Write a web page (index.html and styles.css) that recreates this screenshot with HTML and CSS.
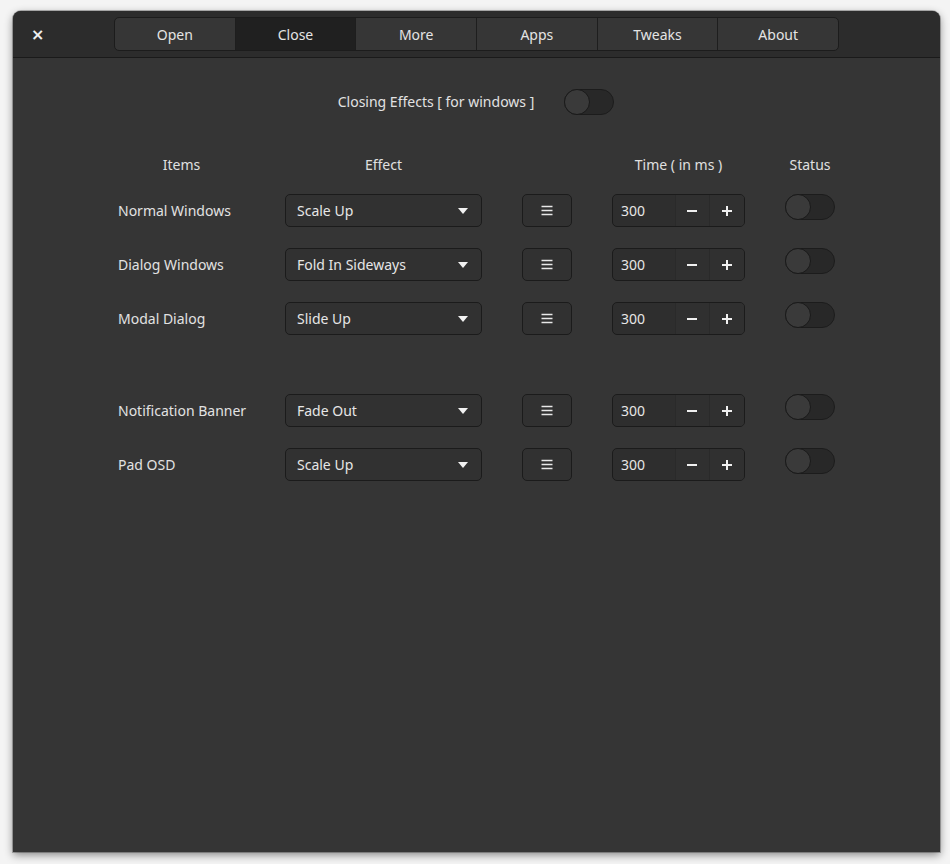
FILE: index.html
```html
<!DOCTYPE html>
<html>
<head>
<meta charset="utf-8">
<link rel="stylesheet" href="styles.css">
</head>
<body>
<div class="window">
  <header class="headerbar">
    <div class="close-cell"><span class="close">×</span></div>
    <nav class="tabs">
      <span class="tab">Open</span>
      <span class="tab active">Close</span>
      <span class="tab">More</span>
      <span class="tab">Apps</span>
      <span class="tab">Tweaks</span>
      <span class="tab">About</span>
    </nav>
    <div></div>
  </header>
  <main class="content">
    <div class="master">
      <span class="master-label">Closing Effects [ for windows ]</span>
      <span class="switch"><span class="knob"></span></span>
    </div>
    <div class="table">
      <div class="row head">
        <span class="h">Items</span>
        <span class="h">Effect</span>
        <span></span>
        <span class="h">Time ( in ms )</span>
        <span class="h">Status</span>
      </div>

      <div class="row">
        <span class="label">Normal Windows</span>
        <span class="dropdown"><span>Scale Up</span><svg class="arrow" width="10" height="6" viewBox="0 0 10 6"><path d="M0 0H10L5 6Z" fill="#f2f2f2"/></svg></span>
        <span class="btn menu"><svg width="12" height="11" viewBox="0 0 12 11"><path d="M0.5 1.5H11.5M0.5 5.5H11.5M0.5 9.5H11.5" stroke="#e8e8e8" stroke-width="1.5"/></svg></span>
        <span class="spin"><span class="val">300</span><span class="sb"><svg width="12" height="12" viewBox="0 0 12 12"><path d="M1 6H11" stroke="#f0f0f0" stroke-width="2"/></svg></span><span class="sb"><svg width="12" height="12" viewBox="0 0 12 12"><path d="M1 6H11M6 1V11" stroke="#f0f0f0" stroke-width="2"/></svg></span></span>
        <span class="switch"><span class="knob"></span></span>
      </div>

      <div class="row">
        <span class="label">Dialog Windows</span>
        <span class="dropdown"><span>Fold In Sideways</span><svg class="arrow" width="10" height="6" viewBox="0 0 10 6"><path d="M0 0H10L5 6Z" fill="#f2f2f2"/></svg></span>
        <span class="btn menu"><svg width="12" height="11" viewBox="0 0 12 11"><path d="M0.5 1.5H11.5M0.5 5.5H11.5M0.5 9.5H11.5" stroke="#e8e8e8" stroke-width="1.5"/></svg></span>
        <span class="spin"><span class="val">300</span><span class="sb"><svg width="12" height="12" viewBox="0 0 12 12"><path d="M1 6H11" stroke="#f0f0f0" stroke-width="2"/></svg></span><span class="sb"><svg width="12" height="12" viewBox="0 0 12 12"><path d="M1 6H11M6 1V11" stroke="#f0f0f0" stroke-width="2"/></svg></span></span>
        <span class="switch"><span class="knob"></span></span>
      </div>

      <div class="row">
        <span class="label">Modal Dialog</span>
        <span class="dropdown"><span>Slide Up</span><svg class="arrow" width="10" height="6" viewBox="0 0 10 6"><path d="M0 0H10L5 6Z" fill="#f2f2f2"/></svg></span>
        <span class="btn menu"><svg width="12" height="11" viewBox="0 0 12 11"><path d="M0.5 1.5H11.5M0.5 5.5H11.5M0.5 9.5H11.5" stroke="#e8e8e8" stroke-width="1.5"/></svg></span>
        <span class="spin"><span class="val">300</span><span class="sb"><svg width="12" height="12" viewBox="0 0 12 12"><path d="M1 6H11" stroke="#f0f0f0" stroke-width="2"/></svg></span><span class="sb"><svg width="12" height="12" viewBox="0 0 12 12"><path d="M1 6H11M6 1V11" stroke="#f0f0f0" stroke-width="2"/></svg></span></span>
        <span class="switch"><span class="knob"></span></span>
      </div>

      <div class="spacer"></div>

      <div class="row">
        <span class="label">Notification Banner</span>
        <span class="dropdown"><span>Fade Out</span><svg class="arrow" width="10" height="6" viewBox="0 0 10 6"><path d="M0 0H10L5 6Z" fill="#f2f2f2"/></svg></span>
        <span class="btn menu"><svg width="12" height="11" viewBox="0 0 12 11"><path d="M0.5 1.5H11.5M0.5 5.5H11.5M0.5 9.5H11.5" stroke="#e8e8e8" stroke-width="1.5"/></svg></span>
        <span class="spin"><span class="val">300</span><span class="sb"><svg width="12" height="12" viewBox="0 0 12 12"><path d="M1 6H11" stroke="#f0f0f0" stroke-width="2"/></svg></span><span class="sb"><svg width="12" height="12" viewBox="0 0 12 12"><path d="M1 6H11M6 1V11" stroke="#f0f0f0" stroke-width="2"/></svg></span></span>
        <span class="switch"><span class="knob"></span></span>
      </div>

      <div class="row">
        <span class="label">Pad OSD</span>
        <span class="dropdown"><span>Scale Up</span><svg class="arrow" width="10" height="6" viewBox="0 0 10 6"><path d="M0 0H10L5 6Z" fill="#f2f2f2"/></svg></span>
        <span class="btn menu"><svg width="12" height="11" viewBox="0 0 12 11"><path d="M0.5 1.5H11.5M0.5 5.5H11.5M0.5 9.5H11.5" stroke="#e8e8e8" stroke-width="1.5"/></svg></span>
        <span class="spin"><span class="val">300</span><span class="sb"><svg width="12" height="12" viewBox="0 0 12 12"><path d="M1 6H11" stroke="#f0f0f0" stroke-width="2"/></svg></span><span class="sb"><svg width="12" height="12" viewBox="0 0 12 12"><path d="M1 6H11M6 1V11" stroke="#f0f0f0" stroke-width="2"/></svg></span></span>
        <span class="switch"><span class="knob"></span></span>
      </div>
    </div>
  </main>
</div>
</body>
</html>
```

FILE: styles.css
```css
* { box-sizing: border-box; }
html, body { margin: 0; padding: 0; }
body {
  background: #f4f4f4;
  font-family: "Noto Sans", "Open Sans", sans-serif;
  font-size: 14px;
  line-height: 18px;
  color: #e2e2e2;
  width: 950px;
  height: 864px;
  overflow: hidden;
  padding: 11px 0 0 13px;
}
.window {
  width: 927px;
  height: 841px;
  background: #353535;
  border-radius: 8px 8px 0 0;
  box-shadow: 0 3px 9px rgba(0,0,0,0.45), 0 0 0 1px rgba(0,0,0,0.25);
  display: flex;
  flex-direction: column;
  overflow: hidden;
}
.headerbar {
  height: 47px;
  background: #2c2c2c;
  border-bottom: 1px solid #1a1a1a;
  display: grid;
  grid-template-columns: 101px 1fr 101px;
  align-items: center;
  flex-shrink: 0;
}
.close-cell { padding-left: 18px; padding-top: 1px; }
.close {
  font-family: "DejaVu Sans", sans-serif;
  font-size: 16px;
  font-weight: bold;
  color: #f0f0f0;
  line-height: 1;
}
.tabs {
  display: flex;
  height: 34px;
  border: 1px solid #1c1c1c;
  border-radius: 5px;
  overflow: hidden;
  background: #363636;
}
.tab {
  flex: 1;
  display: flex;
  align-items: center;
  justify-content: center;
  color: #e4e4e4;
  border-left: 1px solid #1e1e1e;
  padding-top: 2px;
}
.tab:first-child { border-left: none; }
.tab.active { background: #202020; }

.content {
  padding: 31px 0 0 105px;
  display: flex;
  flex-direction: column;
}
.master {
  display: flex;
  align-items: center;
  justify-content: center;
  gap: 30px;
  margin-left: -106px;
  height: 26px;
}
.switch {
  width: 50px;
  height: 26px;
  border-radius: 13px;
  background: #282828;
  border: 1px solid #1c1c1c;
  display: flex;
  align-items: center;
  flex-shrink: 0;
}
.knob {
  width: 26px;
  height: 26px;
  margin-left: -1px;
  border-radius: 50%;
  background: #3a3a3a;
  border: 1px solid #1a1a1a;
}
.table {
  margin-top: 40px;
  display: flex;
  flex-direction: column;
  gap: 21px;
}
.row {
  display: grid;
  grid-template-columns: 127px 197px 50px 133px 50px;
  column-gap: 40px;
  height: 33px;
  align-items: center;
}
.row.head {
  height: 20px;
  margin-bottom: -2px;
}
.h { text-align: center; color: #e0e0e0; }
.label { color: #e2e2e2; white-space: nowrap; }
.spacer { height: 17px; }

.dropdown, .btn, .spin {
  height: 33px;
  background: #313131;
  border: 1px solid #1b1b1b;
  border-radius: 5px;
}
.dropdown {
  display: flex;
  align-items: center;
  justify-content: space-between;
  padding: 0 13px 0 11px;
  color: #e6e6e6;
}
.arrow { margin-top: 1px; }
.btn {
  display: flex;
  align-items: center;
  justify-content: center;
}
.spin {
  display: flex;
  overflow: hidden;
  background: #2e2e2e;
}
.val {
  width: 62px;
  padding-left: 8px;
  display: flex;
  align-items: center;
  color: #e6e6e6;
}
.sb {
  width: 35px;
  display: flex;
  align-items: center;
  justify-content: center;
  border-left: 1px solid #2a2a2a;
  background: #303030;
}
.row .switch { align-self: start; }
```
